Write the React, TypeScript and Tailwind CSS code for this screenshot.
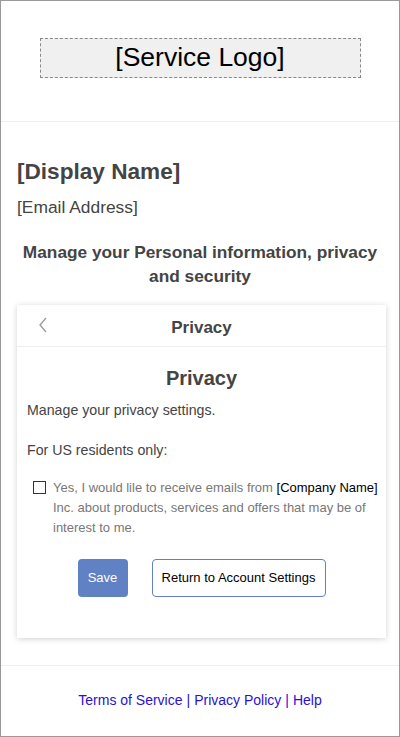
import React from "react";

const font = { fontFamily: '"Liberation Sans", Arial, sans-serif' };

const App = () => {
  return (
    <div
      className="w-[400px] h-[737px] border border-[#999] bg-white flex flex-col text-[#444]"
      style={font}
    >
      <header className="h-[122px] flex items-start justify-center pt-[37px] border-b border-[#eee]">
        <div className="w-[321px] h-[40px] border border-dashed border-[#888] bg-[#f0f0f0] flex items-center justify-center text-[26.5px] text-black">
          [Service Logo]
        </div>
      </header>

      <main className="px-[16px] pt-[36px] flex-1 border-b border-[#eee]">
        <h1 className="text-[22.6px] font-bold leading-[28px]">[Display Name]</h1>
        <p className="text-[17.4px] mt-[11px] leading-[20px]">[Email Address]</p>
        <h2 className="text-[17.3px] font-bold text-center leading-[24px] mt-[23px] px-1">
          Manage your Personal information, privacy and security
        </h2>

        <section className="mt-[17px] w-[369px] bg-white shadow-[0_1px_6px_rgba(0,0,0,0.18)]">
          <div className="relative h-[42px] pt-[4px] flex items-center justify-center border-b border-[#eee]">
            <svg
              className="absolute left-[21px] top-[12px]"
              width="10"
              height="16"
              viewBox="0 0 10 16"
              fill="none"
              stroke="#999"
              strokeWidth="1.3"
            >
              <path d="M8 1 L2 8 L8 15" />
            </svg>
            <span className="text-[17px] font-bold">Privacy</span>
          </div>
          <div className="pl-[10px] pr-[4px] pt-[19px] pb-[41px]">
            <h3 className="text-[20px] font-bold text-center leading-[24px] pr-[6px]">Privacy</h3>
            <p className="text-[14.2px] mt-[11px] leading-[18px]">Manage your privacy settings.</p>
            <p className="text-[14.2px] mt-[22px] leading-[18px]">For US residents only:</p>
            <div className="flex mt-[19px] pl-[6px]">
              <span className="w-[13px] h-[13px] border border-[#333] mt-[3px] shrink-0 bg-white" />
              <p className="text-[13px] leading-[20px] text-[#777] ml-[7px]">
                Yes, I would lile to receive emails from{" "}
                <span className="text-black whitespace-nowrap">[Company Name]</span> Inc. about
                products, services and offers that may be of interest to me.
              </p>
            </div>
            <div className="flex justify-center gap-[24px] mt-[21px] pr-[6px]">
              <button className="w-[50px] h-[38px] rounded-[4px] bg-[#6081c4] text-white text-[13px]">
                Save
              </button>
              <button className="w-[174px] h-[38px] rounded-[4px] border border-[#6081c4] bg-white text-black text-[13px]">
                Return to Account Settings
              </button>
            </div>
          </div>
        </section>
        <div className="h-[27px]" />
      </main>

      <footer className="h-[71px] flex items-center justify-center text-[14px] text-[#2a0fd6]">
        <a>Terms of Service</a>
        <span className="mx-[4px]">|</span>
        <a>Privacy Policy</a>
        <span className="mx-[4px]">|</span>
        <a>Help</a>
      </footer>
    </div>
  );
};

export default App;
